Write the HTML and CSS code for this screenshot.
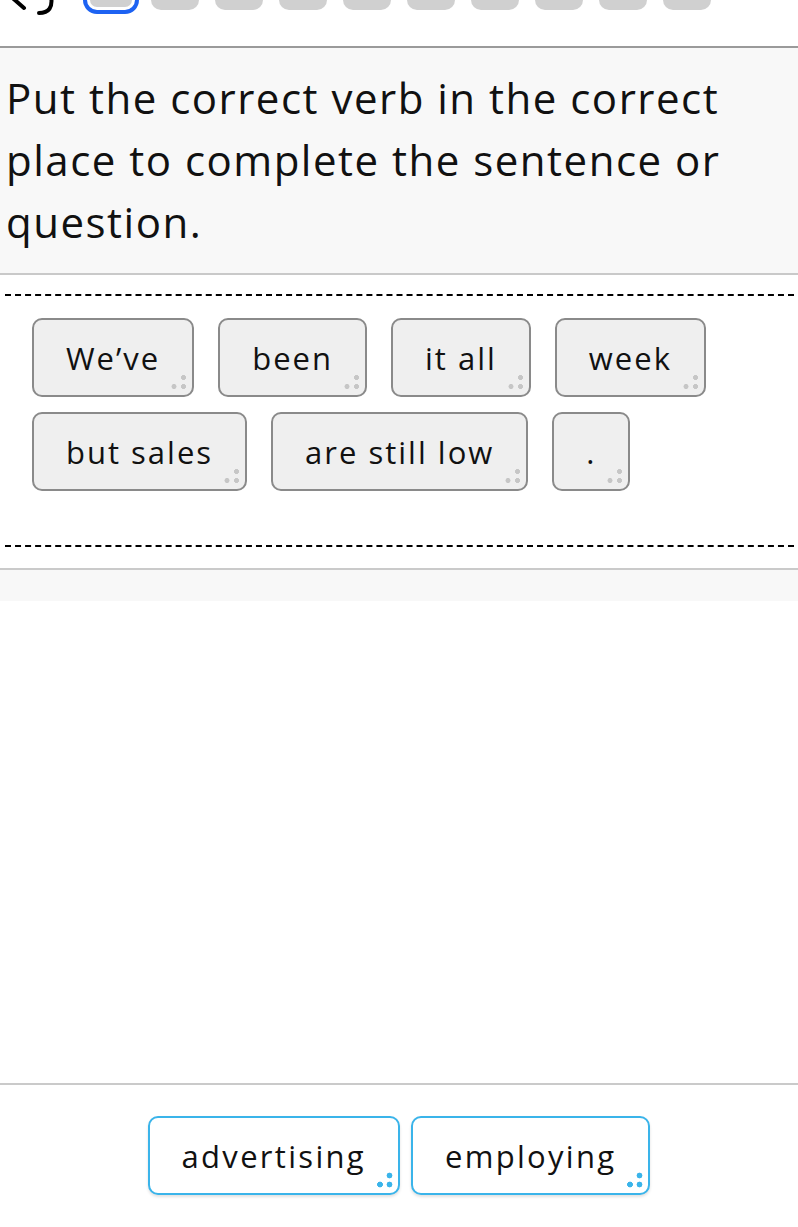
FILE: index.html
```html
<!DOCTYPE html>
<html lang="en">
<head>
    <meta charset="UTF-8">
    <meta name="viewport" content="width=device-width, initial-scale=1.0">
    <title>Word order</title>
    <link rel="stylesheet" href="styles.css">
</head>
<body>
    <div class="page">
        <header class="topbar">
            <svg class="back" width="56" height="16" viewBox="0 0 56 16">
                <path d="M8 -6 L24 8" />
                <path d="M51 -4 Q54 13 39 13" />
            </svg>
            <ul class="steps">
                <li class="step current"></li>
                <li class="step"></li>
                <li class="step"></li>
                <li class="step"></li>
                <li class="step"></li>
                <li class="step"></li>
                <li class="step"></li>
                <li class="step"></li>
                <li class="step"></li>
                <li class="step"></li>
            </ul>
        </header>

        <div class="prompt">
            Put the correct verb in the correct place to complete the sentence or question.
        </div>

        <div class="answer">
            <span class="chip">We’ve</span>
            <span class="chip">been</span>
            <span class="chip">it all</span>
            <span class="chip">week</span>
            <span class="chip">but sales</span>
            <span class="chip">are still low</span>
            <span class="chip">.</span>
        </div>

        <div class="feedback"></div>

        <div class="bank">
            <span class="chip option">advertising</span>
            <span class="chip option">employing</span>
        </div>
    </div>
</body>
</html>
```

FILE: styles.css
```css
*{
    margin: 0;
    padding: 0;
    box-sizing: border-box;
}
li{
    list-style: none;
}
body{
    font-family: "Open Sans", "Noto Sans", sans-serif;
    color: #111;
    background-color: #fff;
}
.page{
    min-height: 100vh;
    display: flex;
    flex-direction: column;
}

/* top bar with back button and progress */
.topbar{
    height: 48px;
    border-bottom: 2px solid #9a9a9a;
    display: flex;
    align-items: flex-start;
    overflow: hidden;
}
.back path{
    fill: none;
    stroke: #000;
    stroke-width: 4;
    stroke-linecap: round;
}
.steps{
    display: flex;
    gap: 16px;
    margin-left: 31px;
    margin-top: -20px;
}
.step{
    width: 48px;
    height: 30px;
    border-radius: 10px;
    background-color: #d0d0d0;
}
.step.current{
    border: 3px solid #fff;
    box-shadow: 0 0 0 4px #1d62f2;
}

/* question */
.prompt{
    background-color: #f8f8f8;
    border-bottom: 2px solid #c9c9c9;
    padding: 19px 6px 20px;
    font-size: 42px;
    line-height: 62px;
    letter-spacing: 1.5px;
}

/* sentence drop area */
.answer{
    margin: 19px 4px 0 5px;
    border-top: 2px dashed #000;
    border-bottom: 2px dashed #000;
    padding: 22px 27px 54px;
    display: flex;
    flex-wrap: wrap;
    gap: 15px 24px;
}
.chip{
    position: relative;
    display: flex;
    align-items: center;
    justify-content: center;
    height: 79px;
    padding: 0 32px;
    border: 2px solid #8a8a8a;
    border-radius: 10px;
    background-color: #efefef;
    font-size: 31px;
    font-weight: 500;
    letter-spacing: 2px;
}
/* drag handle */
.chip::after{
    content: "";
    position: absolute;
    right: 4px;
    bottom: 4px;
    width: 18px;
    height: 18px;
    background:
        radial-gradient(circle at 13.5px 4.5px, #c6c6c6 2.2px, transparent 2.8px),
        radial-gradient(circle at 4px 13.5px, #c6c6c6 2.2px, transparent 2.8px),
        radial-gradient(circle at 13.5px 13.5px, #c6c6c6 2.2px, transparent 2.8px);
}

.feedback{
    margin-top: 21px;
    height: 33px;
    border-top: 2px solid #cacaca;
    background-color: #f8f8f8;
}

/* word bank */
.bank{
    margin-top: auto;
    border-top: 2px solid #cacaca;
    padding: 31px 0 32px;
    display: flex;
    justify-content: center;
    gap: 11px;
}
.option{
    background-color: #fff;
    border-color: #3ab4ea;
    box-shadow: 0 2px 3px rgba(0, 0, 0, 0.12);
    letter-spacing: 2.3px;
}
.option::after{
    background:
        radial-gradient(circle at 13.5px 4.5px, #3ab4ea 2.6px, transparent 3.2px),
        radial-gradient(circle at 4px 13.5px, #3ab4ea 2.6px, transparent 3.2px),
        radial-gradient(circle at 13.5px 13.5px, #3ab4ea 2.6px, transparent 3.2px);
}
```
